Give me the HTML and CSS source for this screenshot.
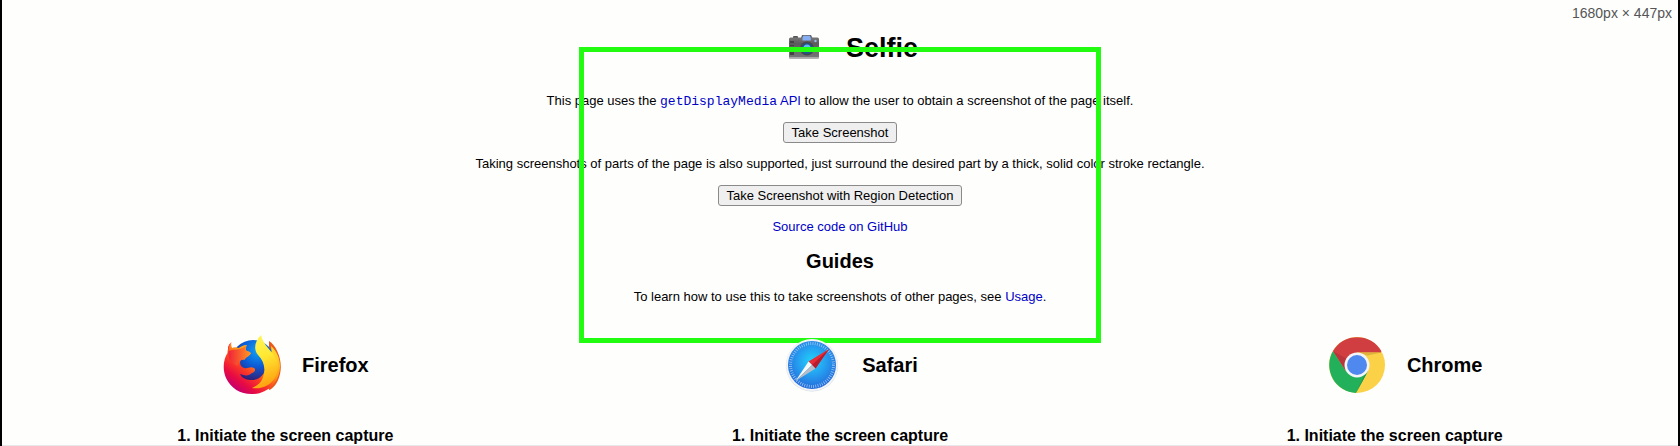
FILE: index.html
```html
<!DOCTYPE html>
<html lang="en">
<head>
<meta charset="utf-8">
<title>Selfie</title>
<link rel="stylesheet" href="styles.css">
</head>
<body>
<div class="size-readout">1680px × 447px</div>
<main class="page">
  <section class="intro">
    <h1 class="title">
      <svg class="camera" viewBox="0 0 30 24" aria-hidden="true">
        <defs><linearGradient id="cam" x2="0" y2="1"><stop stop-color="#777"/><stop offset=".3" stop-color="#5c5c5e"/><stop offset="1" stop-color="#77777a"/></linearGradient></defs>
        <rect x="4" y="1" width="5" height="3" rx="1" fill="#555"/>
        <path d="M12 3l1-3h9l1.500 3z" fill="#666"/>
        <rect x="0" y="2.500" width="30" height="21" rx="1.500" fill="url(#cam)"/>
        <path d="M0 22h30v1.500H0z" fill="#aaa"/>
        <path d="M13.500 3l.8-2.200h6.500l1 2.200v2.500h-8.300z" fill="#86aef5"/>
        <path d="M1 6h4v14H1z" fill="#444"/>
        <path d="M1 9h4M1 12h4M1 15h4" stroke="#777"/>
        <circle cx="18" cy="13.500" r="7" fill="#48484c"/>
        <circle cx="18" cy="13.500" r="5.500" fill="#215289"/>
        <circle cx="18" cy="13" r="3.500" fill="#62b7f3"/>
        <circle cx="26.500" cy="6" r="1.200" fill="#9bb8e8"/>
      </svg>Selfie</h1>
    <p class="text">This page uses the <a class="link" href="#api"><code class="code">getDisplayMedia</code> API</a> to allow the user to obtain a screenshot of the page itself.</p>
    <button class="button" type="button">Take Screenshot</button>
    <p class="text">Taking screenshots of parts of the page is also supported, just surround the desired part by a thick, solid color stroke rectangle.</p>
    <button class="button" type="button">Take Screenshot with Region Detection</button>
    <p class="text"><a class="link" href="#source">Source code on GitHub</a></p>
    <h2 class="subtitle">Guides</h2>
    <p class="text">To learn how to use this to take screenshots of other pages, see <a class="link" href="#usage">Usage</a>.</p>
  </section>
  <div class="region-frame"></div>
  <section class="guides">
    <article class="guide">
      <h3 class="browser">
        <svg class="logo" viewBox="0 0 60 60" aria-hidden="true">
          <defs>
            <linearGradient id="fx" x1=".75" y1=".1" x2=".15" y2=".85"><stop stop-color="#ffd52b"/><stop offset=".35" stop-color="#ff9415"/><stop offset=".6" stop-color="#fb3b25"/><stop offset=".82" stop-color="#e80b43"/><stop offset="1" stop-color="#c8006c"/></linearGradient>
            <radialGradient id="fb" cx=".6" cy=".25" r=".7"><stop stop-color="#12a0f6"/><stop offset=".5" stop-color="#0b5bd5"/><stop offset="1" stop-color="#341b6e"/></radialGradient>
            <linearGradient id="fy" x1=".4" x2=".6" y2="1"><stop stop-color="#fff456"/><stop offset=".4" stop-color="#ffe832"/><stop offset="1" stop-color="#ff9a0d"/></linearGradient>
            <linearGradient id="fh" x2="1"><stop stop-color="#f0203a"/><stop offset="1" stop-color="#ff9820"/></linearGradient>
          </defs>
          <path d="M47 6c8 5 14 20 11 33-2 9-7 15-11 16z" fill="#e85a1c"/>
          <circle cx="31" cy="27" r="22" fill="url(#fb)"/>
          <path d="M9.500 7C6 12 5.500 16 5.500 18 1 25 .5 35 4 43c5 11 16 17 28 16 15-1 26-13 26-28 0-8-4-16-9-20 1 8 1 13-1 16-1-5-2-8-4-10 3 20-5 28-14 28-6 0-10-2-12-6 5 2 9 2 12-1 3-1 4-4 2-5-4-2-6 1-10 0-3-1-4-3-4-6 1-3 4-3 5-3 1-2 5-4 6-6-3-1-4-1-5-3 0-2 0-4 1-5-4 0-7 2-8 3-3-1-5-1-7 0-1-2-1-5-.5-6z" fill="url(#fx)"/>
          <path d="M9.500 7c-2 3-3 6-3 9 4-2 13 0 18-6-1 3-1 4 0 6 3 0 5 2 4 3-2 3-5 3-6 6-5-1-6 1-7 6-7-3-10-8-9-15-1-3-.5-6 3-9z" fill="url(#fh)"/>
          <path d="M39 0c-6 6-8 14-3 20 6 6 8 14 5 22-2 7-7 9-11 11 12 2 25-5 26-21 1-13-14-18-17-32z" fill="url(#fy)"/>
        </svg>Firefox</h3>
      <h4 class="step">1. Initiate the screen capture</h4>
    </article>
    <article class="guide">
      <h3 class="browser">
        <svg class="logo" viewBox="0 0 60 60" aria-hidden="true">
          <defs><radialGradient id="sf" cx=".5" cy=".42" r=".58"><stop stop-color="#20d4fb"/><stop offset=".5" stop-color="#259ff0"/><stop offset="1" stop-color="#2569d9"/></radialGradient></defs>
          <circle cx="30" cy="30.500" r="26" fill="#d4d9df"/>
          <circle cx="30" cy="30" r="26" fill="#f2f4f6"/>
          <circle cx="30" cy="30" r="24" fill="url(#sf)"/>
          <circle cx="30" cy="30" r="21.500" fill="none" stroke="#c6e4fb" stroke-opacity=".7" stroke-width="3" stroke-dasharray=".8 1.450"/>
          <path d="M47 14L26.500 26.500l7 7z" fill="#e92b37"/>
          <path d="M47 14L30 30l3.500 3.500z" fill="#b61c2c"/>
          <path d="M13.500 46l13-19.500 3.500 3.500z" fill="#f7f8f9"/>
          <path d="M13.500 46L30 30l3.500 3.500z" fill="#b6bdc8"/>
        </svg>Safari</h3>
      <h4 class="step">1. Initiate the screen capture</h4>
    </article>
    <article class="guide">
      <h3 class="browser">
        <svg class="logo" viewBox="0 0 60 60" aria-hidden="true">
          <circle cx="30" cy="30" r="28" fill="#fbd147"/>
          <path d="M6 16a28 28 0 0 0 23 42l12-22-22 0z" fill="#22b15a"/>
          <path d="M6 16a28 28 0 0 1 48.300 0L54 17.500H30L19 36z" fill="#d03e42"/>
          <path d="M6 16l13 20 1-12z" fill="#b9343b"/>
          <path d="M30 17.500h24.500l-14 3z" fill="#ddb23d"/>
          <path d="M29 58l11-20-3 3z" fill="#1b974b"/>
          <circle cx="30" cy="30" r="12.500" fill="#f3f5f8"/>
          <circle cx="30" cy="30" r="10" fill="#4f88ee"/>
        </svg>Chrome</h3>
      <h4 class="step">1. Initiate the screen capture</h4>
    </article>
  </section>
</main>
</body>
</html>
```
FILE: styles.css
```css
* {
  box-sizing: border-box;
}

body {
  margin: 0;
  min-height: 100vh;
  position: relative;
  overflow: hidden;
  border: solid #000;
  border-width: 0 2px;
  background: #fefefd;
  color: #000;
  font: 13px/16px "Liberation Sans", Arial, sans-serif;
}

.size-readout {
  position: absolute;
  top: 5px;
  right: 6px;
  color: #555;
  font-size: 14px;
  line-height: 16px;
}

.page {
  padding: 33px 6px 0;
  border-bottom: 1px solid #e8e8e8;
}

.intro {
  display: flex;
  flex-direction: column;
  align-items: center;
  text-align: center;
}

.title {
  display: flex;
  align-items: center;
  margin: 0 0 29px;
  font-size: 27px;
  line-height: 31px;
}

.camera {
  width: 30px;
  height: 24px;
  margin: 0 27px 4px;
}

.text {
  margin: 0;
}

.code {
  font: 13px/15px "Liberation Mono", monospace;
}

.link {
  color: #0000c8;
  text-decoration: none;
}

.button {
  height: 21px;
  margin: 13px 0;
  padding: 0 8px;
  border: 1px solid #8a8a8a;
  border-radius: 3px;
  background: #efefef;
  color: #000;
  font: 13px/15px "Liberation Sans", Arial, sans-serif;
}

.subtitle {
  margin: 14px 0 16px;
  font-size: 20px;
  line-height: 24px;
}

.region-frame {
  position: absolute;
  top: 47px;
  right: 0;
  left: 0;
  width: 522px;
  height: 296px;
  margin: 0 auto;
  border: 5px solid #22fc11;
  pointer-events: none;
}

.guides {
  position: relative;
  display: grid;
  grid-template-columns: repeat(3, 1fr);
  margin-top: 30px;
}

.guide {
  display: flex;
  flex-direction: column;
  align-items: center;
}

.browser {
  display: flex;
  align-items: center;
  margin: 0;
  font-size: 20px;
  line-height: 24px;
}

.logo {
  width: 60px;
  height: 60px;
  margin: 0 20px;
}

.step {
  margin: 31px 0 0;
  font-size: 16px;
  line-height: 19px;
}
```
